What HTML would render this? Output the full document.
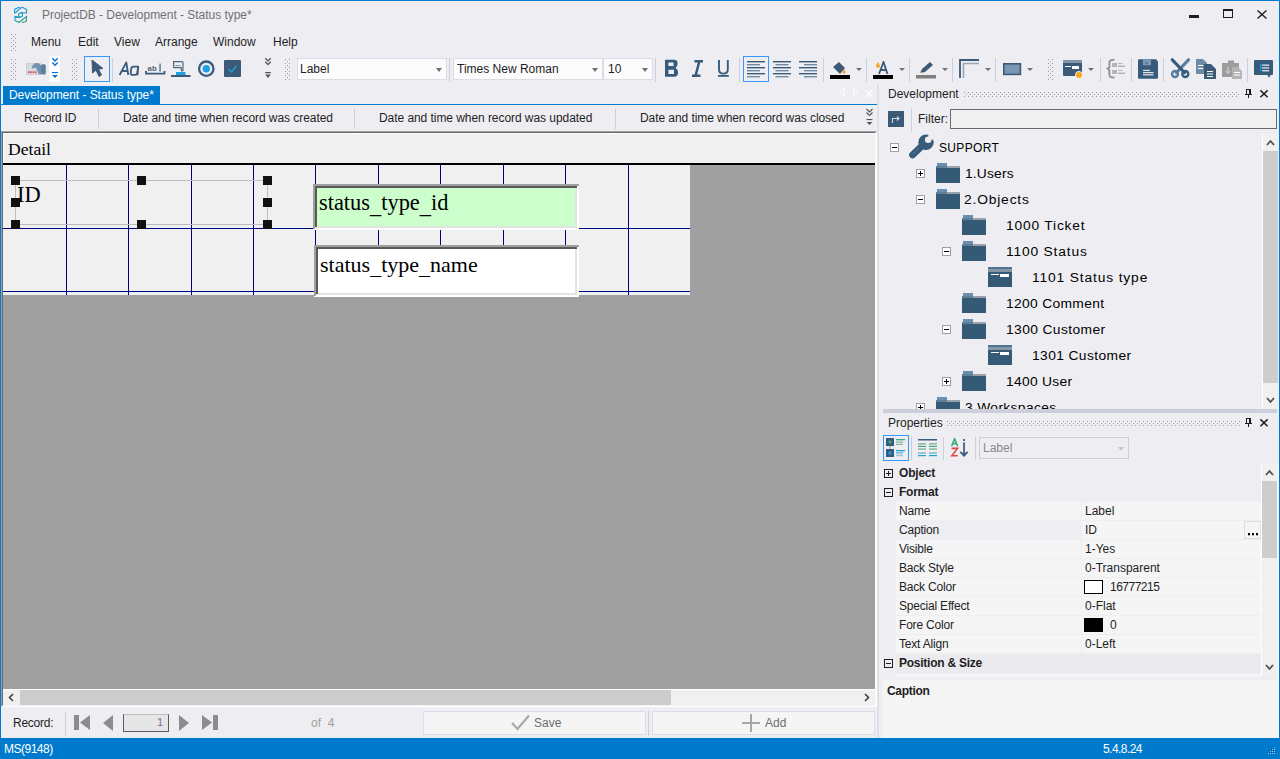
<!DOCTYPE html>
<html><head><meta charset="utf-8">
<style>
*{margin:0;padding:0;box-sizing:border-box}
html,body{width:1280px;height:759px;overflow:hidden;background:#EEEEF2;font-family:"Liberation Sans",sans-serif;font-size:12px;color:#1E1E1E}
.a{position:absolute}
.t{position:absolute;white-space:nowrap;line-height:1}
.serif{font-family:"Liberation Serif",serif;color:#000}
.grip{position:absolute;width:5px;background-image:radial-gradient(circle,#8a8a8a 0.9px,transparent 1.1px);background-size:4px 4px}
.sep{position:absolute;width:1px;background:#CCCEDB}
.combo{position:absolute;background:#FCFCFC;border:1px solid #DADCE6;height:22px;top:58px}
.arr{position:absolute;width:0;height:0;border-left:3.5px solid transparent;border-right:3.5px solid transparent;border-top:4px solid #717171}
.ic{position:absolute}
.gv{position:absolute;width:1px;background:#000080}
.gh{position:absolute;height:1px;background:#000080}
.hd{position:absolute;width:9px;height:9px;background:#111}
.tr{position:absolute;white-space:nowrap;line-height:1;font-size:12px;color:#000}
.xb{position:absolute;width:9px;height:9px;border:1px solid #A0A0A0;background:#fff}
.xb:before{content:"";position:absolute;left:1px;top:3px;width:5px;height:1px;background:#000}
.xp:after{content:"";position:absolute;left:3px;top:1px;width:1px;height:5px;background:#000}
.pr{position:absolute;left:896px;width:365px;height:18px;background:#F5F5F5}
.pn{position:absolute;left:899px;white-space:nowrap;line-height:1;letter-spacing:-0.2px}
.pv{position:absolute;left:1085px;white-space:nowrap;line-height:1}
.cb{position:absolute;width:9px;height:9px;border:1px solid #1E1E1E}
.cb:before{content:"";position:absolute;left:1px;top:3px;width:5px;height:1px;background:#1E1E1E}
.cbp:after{content:"";position:absolute;left:3px;top:1px;width:1px;height:5px;background:#1E1E1E}
.fo{position:absolute;width:24px;height:20px;background:linear-gradient(#355A75,#355A75) 0 5px/24px 15px no-repeat,linear-gradient(#5F7F98,#5F7F98) 0 3px/11px 2px no-repeat,linear-gradient(#9AA3AD,#9AA3AD) 11px 3px/13px 2px no-repeat,linear-gradient(#6B8EAE,#6B8EAE) 1px 0/10px 3px no-repeat}
.fm{position:absolute;width:24px;height:20px;background:linear-gradient(#fff,#fff) 3px 7px/8px 1px no-repeat,linear-gradient(#fff,#fff) 12px 7px/9px 3px no-repeat,linear-gradient(#4F7390,#4F7390) 0 0/24px 2px no-repeat,linear-gradient(#8597A5,#8597A5) 0 2px/24px 3px no-repeat,#355A75}
.arr2{border-left-width:3px;border-right-width:3px;border-top-width:3.5px}
</style></head><body>
<svg width="0" height="0" style="position:absolute"><defs><pattern id="gp" width="4" height="4" patternUnits="userSpaceOnUse"><rect x="0" y="0" width="1" height="1" fill="#9A9A9A"/><rect x="2" y="2" width="1" height="1" fill="#9A9A9A"/></pattern></defs></svg>
<!-- window border -->
<div class="a" style="left:0;top:0;width:1280px;height:1px;background:#007ACC"></div>
<div class="a" style="left:0;top:0;width:1px;height:759px;background:#007ACC"></div>
<div class="a" style="left:1279px;top:0;width:1px;height:759px;background:#007ACC"></div>

<!-- title bar -->
<svg class="ic" style="left:8px;top:3px" width="26" height="24" viewBox="0 0 26 24">
<defs><linearGradient id="lg" gradientUnits="userSpaceOnUse" x1="8" y1="4" x2="17" y2="20"><stop offset="0" stop-color="#1E9BE6"/><stop offset="0.55" stop-color="#22A0B8"/><stop offset="1" stop-color="#2FA060"/></linearGradient></defs>
<g fill="none" stroke="url(#lg)" stroke-width="1.15" stroke-linejoin="round">
<path d="M6.6 10.4 L6.6 6.3 L11.2 4.3 L12.2 5.4 L6.9 10.2"/><path d="M12.2 5.4 L14.3 4.3 L18.6 6.4 L18.6 10 L13 9.6"/><path d="M10.6 10.7 L12.7 9.7 L14.4 10.8 L14.4 13.2 L12.4 14.3 L10.6 13.3 Z"/>
<path d="M6.3 13.3 L12.3 14.4 M6.9 13.5 L7.1 17.6 L11 19.5 L18.6 13.4 L18.2 18.5 L14.1 19.5"/>
</g></svg>
<div class="t" style="left:42px;top:9px;font-size:12px;color:#717171;letter-spacing:-0.03px">ProjectDB - Development - Status type*</div>
<div class="a" style="left:1189px;top:15px;width:10px;height:3px;background:#1E1E1E"></div>
<div class="a" style="left:1223px;top:9px;width:10px;height:9px;border:1px solid #1E1E1E;border-top-width:2px"></div>
<svg class="ic" style="left:1257px;top:10px" width="10" height="9" viewBox="0 0 10 9"><path d="M0.5 0.5 L9.5 8.5 M9.5 0.5 L0.5 8.5" stroke="#1E1E1E" stroke-width="1.4"/></svg>

<!-- menu -->
<svg class="ic" style="left:11px;top:34px" width="5" height="17"><rect width="5" height="17" fill="url(#gp)"/></svg>
<div class="t" style="left:31px;top:36px">Menu</div>
<div class="t" style="left:78px;top:36px">Edit</div>
<div class="t" style="left:114px;top:36px">View</div>
<div class="t" style="left:155px;top:36px">Arrange</div>
<div class="t" style="left:213px;top:36px">Window</div>
<div class="t" style="left:273px;top:36px">Help</div>

<!-- toolbar -->
<svg class="ic" style="left:11px;top:59px" width="5" height="22"><rect width="5" height="22" fill="url(#gp)"/></svg>
<svg class="ic" style="left:26px;top:61px" width="21" height="15" viewBox="0 0 21 15">
<rect x="0.3" y="2.3" width="14.4" height="11.4" fill="#D5DBE1" stroke="#BFC3CA" stroke-width="0.6"/>
<rect x="2" y="10.3" width="1.6" height="1.8" fill="#E84A4A"/><rect x="4.2" y="10.3" width="1.6" height="1.8" fill="#E84A4A"/><rect x="6.6" y="10.3" width="1.4" height="1.8" fill="#E84A4A"/><rect x="8.6" y="10.3" width="2" height="1.8" fill="#E84A4A"/>
<path d="M5.8 6.3 Q6.5 3.8 9 2.3 Q11.5 1.4 13.5 2.8 L15.5 5 L15.5 13.2 L13 13.2 L9.5 6.2 L7.3 7.6 Q5.7 7.8 5.8 6.3 Z" fill="#7392B1"/>
<rect x="15" y="3.3" width="4.8" height="10.2" rx="1.6" fill="#5E7E9E"/>
</svg>
<div class="a" style="left:49px;top:56px;width:11px;height:26px;background:#fff"></div>
<svg class="ic" style="left:51px;top:56px" width="8" height="24" viewBox="0 0 8 24"><path d="M1.3 2.3 L4 5 L6.7 2.3 M1.3 6.5 L4 9.2 L6.7 6.5" fill="none" stroke="#0A72D0" stroke-width="1.5"/><rect x="1" y="16" width="6" height="1.2" fill="#0A72D0"/><path d="M1 19 L7 19 L4 22 Z" fill="#0A72D0"/></svg>
<svg class="ic" style="left:72px;top:59px" width="5" height="22"><rect width="5" height="22" fill="url(#gp)"/></svg>
<div class="a" style="left:84px;top:56px;width:26px;height:26px;border:1px solid #3399FF"></div>
<svg class="ic" style="left:91px;top:59px" width="13" height="19" viewBox="0 0 13 19"><path d="M1 1 L12 9.5 L7.5 10 L10.5 16 L8 17.5 L5 11 L1.5 14 Z" fill="#3A5A78" stroke="#3A5A78" stroke-width="1" stroke-linejoin="round"/></svg>
<div class="sep" style="left:112px;top:58px;height:24px"></div>
<svg class="ic" style="left:115px;top:56px" width="26" height="22" viewBox="0 0 26 22"><g fill="none" stroke="#3A5A78" stroke-width="1.8" stroke-linejoin="round"><path d="M4.6 19 L11.3 6.4 L13.3 19 M7.6 15 L12.6 15"/><path d="M23.2 10.6 L18.6 10.6 Q16.4 10.6 16.1 13.2 L15.8 16.8 Q15.6 18.9 17.6 18.9 L20.2 18.9 Q21.9 18.9 22.2 17 L23.2 10.6 L22.6 19.3"/></g></svg>
<svg class="ic" style="left:145px;top:62px" width="21" height="14" viewBox="0 0 21 14"><text x="2.6" y="9" font-family="Liberation Sans" font-size="7.8" font-weight="bold" fill="#4F6479">ab</text><rect x="14.4" y="1.6" width="1.3" height="8" fill="#4F6479"/><path d="M1 9 L1 11.6 L19.5 11.6 L19.5 9" fill="none" stroke="#3A5A78" stroke-width="1.8"/></svg>
<svg class="ic" style="left:171px;top:60px" width="20" height="18" viewBox="0 0 20 18"><path d="M2.6 1.7 L11 1.7 Q12 1.7 12 2.7 L12 10 Q12 10.9 11.1 10.9 Q10.3 10.9 10.3 10 L10.3 7.6 L3.2 7.6 Q2.6 7.6 2.6 7 Z" fill="none" stroke="#4A6782" stroke-width="1.2"/><rect x="4.2" y="5" width="5.4" height="1.1" fill="#8A9CAC"/><rect x="5" y="12" width="9.5" height="3" fill="#1BA1E2"/><rect x="0" y="15" width="19.5" height="2" fill="#3A5A78"/></svg>
<svg class="ic" style="left:197px;top:60px" width="18" height="18" viewBox="0 0 18 18"><circle cx="9.3" cy="8.7" r="7.2" fill="none" stroke="#365B7B" stroke-width="2.3"/><circle cx="9.3" cy="8.7" r="3.7" fill="#1BA1E2"/></svg>
<svg class="ic" style="left:224px;top:60px" width="18" height="18" viewBox="0 0 18 18"><rect x="0" y="0" width="17" height="17" rx="1" fill="#3A5A78"/><path d="M4.5 9 L7.5 12 L12.5 6" fill="none" stroke="#1BA1E2" stroke-width="1.4"/></svg>
<svg class="ic" style="left:264px;top:57px" width="9" height="22" viewBox="0 0 9 22"><path d="M1.3 1.2 L4 3.9 L6.7 1.2 M1.3 4.8 L4 7.5 L6.7 4.8" fill="none" stroke="#555" stroke-width="1.3"/><rect x="1.2" y="15" width="5.6" height="1.3" fill="#555"/><path d="M1.2 17.6 L6.8 17.6 L4 21 Z" fill="#555"/></svg>
<svg class="ic" style="left:285px;top:59px" width="5" height="22"><rect width="5" height="22" fill="url(#gp)"/></svg>

<div class="combo" style="left:297px;width:150px"></div>
<div class="t" style="left:300px;top:63px">Label</div>
<div class="arr" style="left:436px;top:68px"></div>
<div class="sep" style="left:449px;top:58px;height:24px"></div>
<div class="combo" style="left:453px;width:150px"></div>
<div class="t" style="left:457px;top:63px">Times New Roman</div>
<div class="arr" style="left:592px;top:68px"></div>
<div class="combo" style="left:603px;width:50px"></div>
<div class="t" style="left:608px;top:63px">10</div>
<div class="arr" style="left:642px;top:68px"></div>
<div class="sep" style="left:655px;top:58px;height:24px"></div>

<svg class="ic" style="left:660px;top:56px" width="75" height="26" viewBox="660 56 75 26"><path fill-rule="evenodd" fill="#365B7B" d="M665 59.8 L674.3 59.8 Q677.6 59.8 677.6 63.4 Q677.6 66.6 675.6 67.9 Q678.1 69.2 678.1 72.6 Q678.1 76.8 673.8 76.8 L665 76.8 Z M668.4 62.6 L673.5 62.6 L673.5 66 L668.4 66 Z M668.4 69.8 L674 69.8 L674 73.9 L668.4 73.9 Z"/><path d="M694.4 61.2 L703 61.2 M692 75.8 L700.5 75.8 M699.3 61.5 L695.6 75.5" stroke="#365B7B" stroke-width="2.5" fill="none"/><path d="M719 60 L719 69.5 Q719 73.6 723.4 73.6 Q727.8 73.6 727.8 69.5 L727.8 60" stroke="#365B7B" stroke-width="1.9" fill="none"/><rect x="718" y="75" width="10.8" height="1.8" fill="#365B7B"/></svg>


<div class="sep" style="left:739px;top:58px;height:24px"></div>
<div class="a" style="left:743px;top:56px;width:26px;height:26px;border:1px solid #3399FF"></div>
<svg class="ic" style="left:747px;top:60px" width="18" height="18" viewBox="0 0 18 18"><g fill="#3A5A78"><rect x="0" y="1" width="18" height="1.4"/><rect x="0" y="4" width="13" height="1.4" fill="#6F8BA4"/><rect x="0" y="7" width="18" height="1.4"/><rect x="0" y="10" width="13" height="1.4" fill="#6F8BA4"/><rect x="0" y="13" width="18" height="1.4"/><rect x="0" y="16" width="13" height="1.4" fill="#6F8BA4"/></g></svg>
<svg class="ic" style="left:773px;top:60px" width="18" height="18" viewBox="0 0 18 18"><g fill="#3A5A78"><rect x="0" y="1" width="18" height="1.4"/><rect x="2.5" y="4" width="13" height="1.4" fill="#6F8BA4"/><rect x="0" y="7" width="18" height="1.4"/><rect x="2.5" y="10" width="13" height="1.4" fill="#6F8BA4"/><rect x="0" y="13" width="18" height="1.4"/><rect x="2.5" y="16" width="13" height="1.4" fill="#6F8BA4"/></g></svg>
<svg class="ic" style="left:799px;top:60px" width="18" height="18" viewBox="0 0 18 18"><g fill="#3A5A78"><rect x="0" y="1" width="18" height="1.4"/><rect x="5" y="4" width="13" height="1.4" fill="#6F8BA4"/><rect x="0" y="7" width="18" height="1.4"/><rect x="5" y="10" width="13" height="1.4" fill="#6F8BA4"/><rect x="0" y="13" width="18" height="1.4"/><rect x="5" y="16" width="13" height="1.4" fill="#6F8BA4"/></g></svg>
<div class="sep" style="left:823px;top:58px;height:24px"></div>
<svg class="ic" style="left:830px;top:61px" width="21" height="18" viewBox="0 0 21 18"><path d="M3 6 L9 1 L15 7 L10 13 Z" fill="#3A5A78"/><path d="M14 8 Q16 10 15.5 12 Q14 13.5 12.5 12 Q12.5 10 14 8Z" fill="#F5A52A"/><rect x="0" y="14" width="20" height="4" fill="#000"/></svg>
<div class="arr arr2" style="left:856px;top:68px"></div>
<div class="sep" style="left:866px;top:58px;height:24px"></div>
<svg class="ic" style="left:873px;top:61px" width="21" height="18" viewBox="0 0 21 18"><path d="M6 13 L10.5 1 L14.5 13 M7.5 9 L13 9" fill="none" stroke="#3A5A78" stroke-width="1.8"/><path d="M5 1 Q7 3.6 7 5 Q7 7 5 7 Q3 7 3 5 Q3 3.6 5 1Z" fill="#F5A52A"/><rect x="0" y="14" width="20" height="4" fill="#000"/></svg>
<div class="arr arr2" style="left:899px;top:68px"></div>
<div class="sep" style="left:909px;top:58px;height:24px"></div>
<svg class="ic" style="left:916px;top:61px" width="21" height="18" viewBox="0 0 21 18"><path d="M4 12 L6 8 L14 1 L17 4 L9 11 Z" fill="#3A5A78"/><path d="M4 12 L5 10.5 L6 12 Z" fill="#F5A52A"/><rect x="0" y="14" width="20" height="3.5" fill="#7F7F7F"/></svg>
<div class="arr arr2" style="left:942px;top:68px"></div>
<div class="sep" style="left:952px;top:58px;height:24px"></div>
<svg class="ic" style="left:959px;top:59px" width="21" height="20" viewBox="0 0 21 20"><path d="M1 19 L1 1 L20 1" fill="none" stroke="#3A5A78" stroke-width="1.8"/><path d="M4.5 19 L4.5 4.5 L20 4.5" fill="none" stroke="#98A6B4" stroke-width="1.6"/></svg>
<div class="arr arr2" style="left:985px;top:68px"></div>
<div class="sep" style="left:995px;top:58px;height:24px"></div>
<svg class="ic" style="left:1003px;top:63px" width="19" height="13" viewBox="0 0 19 13"><rect x="0.8" y="0.8" width="16.6" height="10.6" fill="#7A98B6" stroke="#3A5A78" stroke-width="1.6"/></svg>
<div class="arr arr2" style="left:1027px;top:68px"></div>
<svg class="ic" style="left:1048px;top:59px" width="5" height="22"><rect width="5" height="22" fill="url(#gp)"/></svg>
<svg class="ic" style="left:1063px;top:60px" width="21" height="19" viewBox="0 0 21 19"><rect x="0" y="0" width="19" height="16" rx="1" fill="#3A5A78"/><rect x="0" y="0" width="19" height="3" fill="#8397A8"/><rect x="2" y="6" width="6" height="1" fill="#fff"/><rect x="9" y="6" width="7" height="3" fill="#fff"/><circle cx="16" cy="15" r="3.6" fill="#F5A52A" stroke="#fff" stroke-width="0.8"/></svg>
<div class="arr arr2" style="left:1088px;top:68px"></div>
<div class="sep" style="left:1100px;top:58px;height:24px"></div>
<svg class="ic" style="left:1100px;top:54px" width="30" height="30" viewBox="1100 54 30 30"><path d="M1114.5 59.6 Q1109.4 59.6 1109.4 62.2 L1109.4 67.2 L1107.6 68.6 L1109.4 70 L1109.4 75 Q1109.4 77.6 1114.5 77.6" fill="none" stroke="#8E8E8E" stroke-width="1.8"/><rect x="1112" y="63" width="5" height="4" fill="#B4B4B4"/><rect x="1112" y="70" width="5" height="4" fill="#B4B4B4"/><rect x="1118" y="63" width="4.5" height="1" fill="#B8B8B8"/><rect x="1118" y="65.6" width="7" height="1.3" fill="#A8A8A8"/><rect x="1118" y="70" width="4.5" height="1" fill="#B8B8B8"/><rect x="1118" y="72.6" width="7" height="1.3" fill="#A8A8A8"/></svg>
<div class="sep" style="left:1131px;top:58px;height:24px"></div>
<svg class="ic" style="left:1130px;top:54px" width="35" height="30" viewBox="1130 54 35 30"><path d="M1138 60.3 Q1138 59.3 1139 59.3 L1156 59.3 L1158 61.5 L1158 77.8 Q1158 78.8 1157 78.8 L1139 78.8 Q1138 78.8 1138 77.8 Z" fill="#365B7B"/><rect x="1143" y="59.3" width="8" height="6" fill="#7A9AB8"/><rect x="1145.5" y="62.6" width="2.5" height="1" fill="#365B7B"/><rect x="1143" y="69.8" width="7" height="1.2" fill="#E3E8ED"/><rect x="1143" y="72" width="10.5" height="1.2" fill="#E3E8ED"/><rect x="1143" y="74.2" width="10.5" height="1.2" fill="#E3E8ED"/></svg>
<div class="sep" style="left:1163px;top:58px;height:24px"></div>
<svg class="ic" style="left:1165px;top:54px" width="30" height="30" viewBox="1165 54 30 30"><path d="M1188.5 59.8 L1176.5 72.5" stroke="#5A7E9E" stroke-width="3.2" stroke-linecap="round"/><path d="M1172.3 59.8 L1184.5 72.5" stroke="#365B7B" stroke-width="3.2" stroke-linecap="round"/><circle cx="1175" cy="74" r="3" fill="none" stroke="#5A7E9E" stroke-width="2.4"/><circle cx="1185.3" cy="74" r="3" fill="none" stroke="#365B7B" stroke-width="2.4"/></svg>
<svg class="ic" style="left:1196px;top:59px" width="21" height="20" viewBox="0 0 21 20"><path d="M0 0 L7 0 L11 4 L11 15 L0 15 Z" fill="#6F8BA4"/><path d="M8 5 L15 5 L20 10 L20 20 L8 20 Z" fill="#3A5A78"/><rect x="11" y="12" width="6" height="1" fill="#fff"/><rect x="11" y="14.5" width="6" height="1" fill="#fff"/><rect x="11" y="17" width="6" height="1" fill="#fff"/><rect x="2" y="6" width="5" height="1" fill="#fff"/><rect x="2" y="9" width="5" height="1" fill="#fff"/></svg>
<svg class="ic" style="left:1222px;top:59px" width="21" height="20" viewBox="0 0 21 20"><path d="M0 4 L6 4 L6 1.5 L12 1.5 L12 4 L17 4 L17 18 L0 18 Z" fill="#9C9C9C"/><path d="M10 8 L16 8 L20 12 L20 20 L10 20 Z" fill="#B5B5B5"/><rect x="12" y="13" width="6" height="1" fill="#fff"/><rect x="12" y="15.5" width="6" height="1" fill="#fff"/><path d="M6 8 L6 14 M3.5 12 L6 14.5 L8.5 12" fill="none" stroke="#DADADA" stroke-width="1"/></svg>
<div class="sep" style="left:1247px;top:58px;height:24px"></div>
<svg class="ic" style="left:1250px;top:54px" width="28" height="30" viewBox="1250 54 28 30"><path d="M1254 61 Q1254 60 1255 60 L1272 60 Q1273 60 1273 61 L1273 74 Q1273 75 1272 75 L1270.5 75 L1269 78 L1267.5 75 L1255 75 Q1254 75 1254 74 Z" fill="#365B7B"/><rect x="1262.2" y="64.5" width="7" height="1.3" fill="#E3E8ED"/><rect x="1262.2" y="67.3" width="7" height="1.3" fill="#E3E8ED"/><rect x="1262.2" y="70.1" width="7" height="1.3" fill="#E3E8ED"/><path d="M1259.9 65.2 L1260.9 64.6 L1260.9 71" fill="none" stroke="#1BA1E2" stroke-width="1.2"/></svg>

<!-- tab strip -->
<div class="a" style="left:3px;top:86px;width:157px;height:18px;background:#007ACC"></div>
<div class="t" style="left:9px;top:89px;color:#fff;letter-spacing:-0.05px">Development - Status type*</div>
<svg class="ic" style="left:838px;top:88px" width="40" height="10" viewBox="0 0 40 10"><path d="M6 0.5 L1.5 4.5 L6 8.5 Z M15.5 0.5 L20 4.5 L15.5 8.5 Z" fill="none" stroke="#fff" stroke-width="1"/><path d="M27.5 2 L34.5 9 M34.5 2 L27.5 9" stroke="#fff" stroke-width="1.3"/></svg>
<div class="a" style="left:0;top:104px;width:877px;height:1px;background:#007ACC"></div>

<!-- column headers -->
<div class="t" style="left:24px;top:112px;letter-spacing:-0.2px">Record ID</div>
<div class="sep" style="left:98px;top:109px;height:20px"></div>
<div class="t" style="left:123px;top:112px;letter-spacing:-0.06px">Date and time when record was created</div>
<div class="sep" style="left:354px;top:109px;height:20px"></div>
<div class="t" style="left:379px;top:112px;letter-spacing:-0.06px">Date and time when record was updated</div>
<div class="sep" style="left:615px;top:109px;height:20px"></div>
<div class="t" style="left:640px;top:112px;letter-spacing:-0.07px">Date and time when record was closed</div>
<svg class="ic" style="left:865px;top:108px" width="9" height="20" viewBox="0 0 9 20"><path d="M1.5 1 L4.5 4 L7.5 1 M1.5 4.5 L4.5 7.5 L7.5 4.5" fill="none" stroke="#555" stroke-width="1.1"/><rect x="1.5" y="11" width="6" height="1.1" fill="#555"/><path d="M1.5 14 L7.5 14 L4.5 17 Z" fill="#555"/></svg>

<!-- detail area -->
<div class="a" style="left:1px;top:131px;width:876px;height:576px;border-style:solid;border-width:1px;border-color:#A0A0A0 #FFFFFF #FFFFFF #A0A0A0;background:#A0A0A0"><div class="a" style="left:0;top:0;right:0;bottom:0;border-style:solid;border-width:1px;border-color:#696969 #FAFAFA #F0F0F0 #696969"></div></div>
<div class="a" style="left:3px;top:133px;width:872px;height:30px;background:#F0F0F0;border-top:1px solid #fff;border-left:1px solid #fff"></div>
<div class="t serif" style="left:8px;top:140.5px;font-size:17.6px">Detail</div>
<div class="a" style="left:3px;top:163px;width:872px;height:2px;background:#000"></div>
<div class="a" style="left:3px;top:165px;width:687px;height:130px;background:#F0F0F0"></div>
<!-- grid -->
<div class="gv" style="left:66px;top:165px;height:130px"></div>
<div class="gv" style="left:128px;top:165px;height:130px"></div>
<div class="gv" style="left:191px;top:165px;height:130px"></div>
<div class="gv" style="left:253px;top:165px;height:130px"></div>
<div class="gv" style="left:315px;top:165px;height:130px"></div>
<div class="gv" style="left:378px;top:165px;height:130px"></div>
<div class="gv" style="left:440px;top:165px;height:130px"></div>
<div class="gv" style="left:503px;top:165px;height:130px"></div>
<div class="gv" style="left:565px;top:165px;height:130px"></div>
<div class="gv" style="left:628px;top:165px;height:130px"></div>
<div class="gh" style="left:3px;top:228px;width:687px"></div>
<div class="gh" style="left:3px;top:291px;width:687px"></div>
<!-- label selection -->
<div class="a" style="left:15px;top:180px;width:253px;height:45px;border:1px solid #BDBDBD"></div>
<div class="t serif" style="left:17px;top:184px;font-size:22.4px">ID</div>
<div class="hd" style="left:11px;top:176px"></div><div class="hd" style="left:137px;top:176px"></div><div class="hd" style="left:263px;top:176px"></div>
<div class="hd" style="left:11px;top:198px"></div><div class="hd" style="left:263px;top:198px"></div>
<div class="hd" style="left:11px;top:220px"></div><div class="hd" style="left:137px;top:220px"></div><div class="hd" style="left:263px;top:220px"></div>
<!-- text boxes -->
<div class="a" style="left:313px;top:184px;width:266px;height:46px;background:#FFFFFF"></div><div class="a" style="left:315px;top:186px;width:262px;height:42px;background:#E3E3E3"></div><div class="a" style="left:317px;top:188px;width:258px;height:38px;background:#CCFFCC"></div><div class="a" style="left:313px;top:184px;width:266px;height:2px;background:#A0A0A0"></div><div class="a" style="left:313px;top:184px;width:2px;height:45px;background:#A0A0A0"></div><div class="a" style="left:315px;top:186px;width:262px;height:2px;background:#5A5A5A"></div><div class="a" style="left:315px;top:186px;width:2px;height:41px;background:#5A5A5A"></div>
<div class="t serif" style="left:319px;top:192px;font-size:22.4px">status<span style="position:relative;top:2.5px">_</span>type<span style="position:relative;top:2.5px">_</span>id</div>
<div class="a" style="left:314px;top:245px;width:265px;height:52px;background:#FFFFFF"></div><div class="a" style="left:316px;top:247px;width:261px;height:48px;background:#E3E3E3"></div><div class="a" style="left:318px;top:249px;width:257px;height:44px;background:#FFFFFF"></div><div class="a" style="left:314px;top:245px;width:265px;height:2px;background:#A0A0A0"></div><div class="a" style="left:314px;top:245px;width:2px;height:51px;background:#A0A0A0"></div><div class="a" style="left:316px;top:247px;width:261px;height:2px;background:#5A5A5A"></div><div class="a" style="left:316px;top:247px;width:2px;height:47px;background:#5A5A5A"></div>
<div class="t serif" style="left:320px;top:254px;font-size:22px">status<span style="position:relative;top:2px">_</span>type<span style="position:relative;top:2px">_</span>name</div>

<!-- h scrollbar -->
<div class="a" style="left:3px;top:689px;width:872px;height:1px;background:#FFFFFF"></div>
<div class="a" style="left:3px;top:690px;width:872px;height:15px;background:#F0F0F0"></div>
<div class="a" style="left:20px;top:690px;width:651px;height:15px;background:#CDCDCD"></div>
<svg class="ic" style="left:7px;top:693px" width="8" height="9" viewBox="0 0 8 9"><path d="M6 1 L2.5 4.5 L6 8" fill="none" stroke="#404040" stroke-width="1.6"/></svg>
<svg class="ic" style="left:863px;top:693px" width="8" height="9" viewBox="0 0 8 9"><path d="M2 1 L5.5 4.5 L2 8" fill="none" stroke="#404040" stroke-width="1.6"/></svg>

<!-- record nav -->
<div class="t" style="left:13px;top:717px;letter-spacing:-0.25px">Record:</div>
<div class="sep" style="left:65px;top:712px;height:24px"></div>
<svg class="ic" style="left:74px;top:715px" width="146" height="17" viewBox="0 0 146 17"><g fill="#8C8C8C"><rect x="0" y="0" width="5" height="15"/><path d="M16 0 L16 15 L6 7.5 Z"/><path d="M39 0 L39 16 L29 8 Z"/><path d="M105 0 L105 16 L115 8 Z"/><path d="M128 0 L128 15 L138 7.5 Z"/><rect x="139" y="0" width="5" height="15"/></g></svg>
<div class="a" style="left:123px;top:714px;width:46px;height:18px;background:#E6E6E6;border:1px solid #5A5A5A;border-top-color:#BDBDBD"></div>
<div class="t" style="left:157px;top:717px;color:#7C6F9A;font-size:11px">1</div>
<div class="t" style="left:311px;top:717px;color:#A0A0A0">of&nbsp; 4</div>
<div class="a" style="left:423px;top:711px;width:223px;height:24px;background:#F5F5F5;border:1px solid #DADCE6"></div>
<svg class="ic" style="left:511px;top:714px" width="19" height="17" viewBox="0 0 19 17"><path d="M1 9 L6.5 15 L18 1.5" fill="none" stroke="#A6A6A6" stroke-width="2"/></svg>
<div class="t" style="left:534px;top:717px;color:#6D6D6D">Save</div>
<div class="sep" style="left:648px;top:711px;height:25px"></div>
<div class="a" style="left:652px;top:711px;width:223px;height:24px;background:#F5F5F5;border:1px solid #DADCE6"></div>
<svg class="ic" style="left:742px;top:714px" width="18" height="18" viewBox="0 0 18 18"><path d="M9 0 L9 18 M0 9 L18 9" stroke="#A6A6A6" stroke-width="2"/></svg>
<div class="t" style="left:765px;top:717px;color:#6D6D6D">Add</div>

<!-- right panel -->
<div class="a" style="left:877px;top:84px;width:2px;height:654px;background:#DEDFE8"></div>
<div class="t" style="left:888px;top:88px">Development</div>
<svg class="ic" style="left:964px;top:92px" width="275" height="5"><rect width="275" height="5" fill="url(#gp)"/></svg>
<svg class="ic" style="left:1240px;top:84px" width="36" height="20" viewBox="1240 84 36 20"><g fill="#1E1E1E"><rect x="1246" y="89" width="5" height="1"/><rect x="1246" y="89" width="1" height="5"/><rect x="1249" y="89" width="2" height="5"/><rect x="1245" y="94" width="7" height="1"/><rect x="1248" y="95" width="1" height="3"/></g><path d="M1260.4 90.4 L1267.6 97.2 M1267.6 90.4 L1260.4 97.2" stroke="#1E1E1E" stroke-width="1.5"/></svg>

<div class="a" style="left:888px;top:111px;width:16px;height:16px;background:#3A5A78"></div>
<svg class="ic" style="left:888px;top:111px" width="16" height="16" viewBox="0 0 16 16"><path d="M4.5 12 L4.5 7.5 L11 7.5 M9 5.5 L11 7.5 L9 9.5" fill="none" stroke="#D0D8E0" stroke-width="1.1"/></svg>
<div class="sep" style="left:911px;top:108px;height:24px"></div>
<div class="t" style="left:918px;top:113px">Filter:</div>
<div class="a" style="left:950px;top:109px;width:327px;height:20px;background:#F0F0F0;border:1px solid #6A6A6A"></div>

<!-- tree -->
<div class="xb" style="left:890px;top:143px"></div>
<svg class="ic" style="left:904px;top:130px" width="36" height="32" viewBox="0 0 36 32"><path d="M21 13 L8.5 25" stroke="#365B7B" stroke-width="6.8" stroke-linecap="round"/><circle cx="22" cy="12.2" r="7.7" fill="#365B7B"/><circle cx="24.2" cy="9.8" r="3.3" fill="#EEEEF2"/><path d="M24.2 9.8 L24.5 2 L33 9.5 Z" fill="#EEEEF2"/><path d="M9 24 L14.5 18.5" stroke="#6F8FAA" stroke-width="0.8" stroke-dasharray="1.2 0.6"/></svg>
<div class="tr" style="left:939px;top:142px;letter-spacing:0.35px">SUPPORT</div>

<div class="xb xp" style="left:916px;top:169px"></div>
<div class="fo" style="left:936px;top:163px"></div>
<div class="tr" style="left:965px;top:168px;letter-spacing:0.15px;transform:scaleX(1.15);transform-origin:0 0">1.Users</div>
<div class="xb" style="left:916px;top:195px"></div>
<div class="fo" style="left:936px;top:189px"></div>
<div class="tr" style="left:964.2px;top:194px;letter-spacing:0.72px;transform:scaleX(1.15);transform-origin:0 0">2.Objects</div>
<div class="fo" style="left:962px;top:215px"></div>
<div class="tr" style="left:1005.5px;top:220px;letter-spacing:0.7px;transform:scaleX(1.15);transform-origin:0 0">1000 Ticket</div>
<div class="xb" style="left:942px;top:247px"></div>
<div class="fo" style="left:962px;top:241px"></div>
<div class="tr" style="left:1005.5px;top:246px;letter-spacing:0.71px;transform:scaleX(1.15);transform-origin:0 0">1100 Status</div>
<div class="fm" style="left:988px;top:267px"></div>
<div class="tr" style="left:1031.9px;top:272px;letter-spacing:0.74px;transform:scaleX(1.15);transform-origin:0 0">1101 Status type</div>
<div class="fo" style="left:962px;top:293px"></div>
<div class="tr" style="left:1005.5px;top:298px;letter-spacing:0.29px;transform:scaleX(1.15);transform-origin:0 0">1200 Comment</div>
<div class="xb" style="left:942px;top:325px"></div>
<div class="fo" style="left:962px;top:319px"></div>
<div class="tr" style="left:1005.5px;top:324px;letter-spacing:0.34px;transform:scaleX(1.15);transform-origin:0 0">1300 Customer</div>
<div class="fm" style="left:988px;top:345px"></div>
<div class="tr" style="left:1031.7px;top:350px;letter-spacing:0.34px;transform:scaleX(1.15);transform-origin:0 0">1301 Customer</div>
<div class="xb xp" style="left:942px;top:377px"></div>
<div class="fo" style="left:962px;top:371px"></div>
<div class="tr" style="left:1005.5px;top:376px;letter-spacing:0.27px;transform:scaleX(1.15);transform-origin:0 0">1400 User</div>
<div class="a" style="left:880px;top:397px;width:382px;height:12px;overflow:hidden">
<div class="xb xp" style="left:36px;top:6px"></div>
<div class="fo" style="left:56px;top:0px"></div>
<div class="tr" style="left:85px;top:5px;letter-spacing:0.31px;transform:scaleX(1.15);transform-origin:0 0">3.Workspaces</div>
</div>
<!-- tree scrollbar -->
<div class="a" style="left:1262px;top:134px;width:1px;height:275px;background:#FFFFFF"></div>
<div class="a" style="left:1263px;top:134px;width:15px;height:275px;background:#F0F0F0"></div>
<div class="a" style="left:1263px;top:151px;width:15px;height:232px;background:#CDCDCD"></div>
<svg class="ic" style="left:1266px;top:139px" width="9" height="7" viewBox="0 0 9 7"><path d="M1 6 L4.5 2 L8 6" fill="none" stroke="#505050" stroke-width="1.8"/></svg>
<svg class="ic" style="left:1266px;top:397px" width="9" height="7" viewBox="0 0 9 7"><path d="M1 1 L4.5 5 L8 1" fill="none" stroke="#505050" stroke-width="1.8"/></svg>
<!-- splitter -->
<div class="a" style="left:883px;top:409px;width:394px;height:4px;background:#CCCEDB"></div>

<!-- properties -->
<div class="t" style="left:888px;top:417px">Properties</div>
<svg class="ic" style="left:947px;top:421px" width="293" height="5"><rect width="293" height="5" fill="url(#gp)"/></svg>
<svg class="ic" style="left:1240px;top:413px" width="36" height="20" viewBox="1240 413 36 20"><g fill="#1E1E1E"><rect x="1246" y="418" width="5" height="1"/><rect x="1246" y="418" width="1" height="5"/><rect x="1249" y="418" width="2" height="5"/><rect x="1245" y="423" width="7" height="1"/><rect x="1248" y="424" width="1" height="3"/></g><path d="M1260.4 419.4 L1267.6 426.2 M1267.6 419.4 L1260.4 426.2" stroke="#1E1E1E" stroke-width="1.5"/></svg>

<div class="a" style="left:883px;top:435px;width:26px;height:26px;border:1px solid #3399FF"></div>
<svg class="ic" style="left:886px;top:438px" width="20" height="20" viewBox="0 0 20 20"><rect x="3.5" y="7" width="1" height="5" fill="#8A9AA8"/><rect x="0" y="0" width="8" height="8" fill="#365B7B"/><rect x="0" y="11" width="8" height="8" fill="#365B7B"/><path d="M4 2 L6 4 L4 6 L2 4 Z" fill="#3DAA7A"/><path d="M4 13 L6 15 L4 17 L2 15 Z" fill="#1BA1E2"/><rect x="10" y="1" width="9" height="1.3" fill="#3DAA7A"/><rect x="10" y="3.2" width="7" height="1.8" fill="#A8C4B4"/><rect x="10" y="5.8" width="7" height="1.2" fill="#7FB59A"/><rect x="10" y="12" width="9" height="1.3" fill="#1BA1E2"/><rect x="10" y="14.2" width="7" height="1.4" fill="#6DB5DC"/><rect x="10" y="16.6" width="7" height="1.6" fill="#9DC3D6"/></svg>
<div class="sep" style="left:911px;top:437px;height:23px"></div>
<svg class="ic" style="left:918px;top:439px" width="20" height="18" viewBox="0 0 20 18"><rect x="0" y="0" width="19" height="1.5" fill="#365B7B"/><rect x="0" y="4" width="8" height="1.7" fill="#98BCA8"/><rect x="11" y="4" width="8" height="1.7" fill="#98BCA8"/><rect x="0" y="6.8" width="8" height="1.2" fill="#3DAA7A"/><rect x="11" y="6.8" width="8" height="1.2" fill="#3DAA7A"/><rect x="0" y="9.2" width="8" height="1.7" fill="#98BCA8"/><rect x="11" y="9.2" width="8" height="1.7" fill="#98BCA8"/><rect x="0" y="13.2" width="8" height="1.7" fill="#8DBAD2"/><rect x="11" y="13.2" width="8" height="1.7" fill="#8DBAD2"/><rect x="0" y="16" width="8" height="1.2" fill="#1BA1E2"/><rect x="11" y="16" width="8" height="1.2" fill="#1BA1E2"/></svg>
<div class="sep" style="left:943px;top:437px;height:23px"></div>
<svg class="ic" style="left:950px;top:438px" width="20" height="20" viewBox="0 0 20 20"><path d="M1.6 8.3 L4.6 0.6 L7.6 8.3 M2.8 5.6 L6.4 5.6" fill="none" stroke="#3DAA7A" stroke-width="1.6"/><path d="M1.6 10.4 L7.6 10.4 L1.8 17.8 L7.8 17.8" fill="none" stroke="#E04848" stroke-width="1.6"/><rect x="13.2" y="1" width="1.7" height="2" fill="#365B7B"/><rect x="13.2" y="4.4" width="1.7" height="13" fill="#365B7B"/><path d="M10.4 13.8 L14 17.6 L17.6 13.8" fill="none" stroke="#365B7B" stroke-width="1.8"/></svg>
<div class="sep" style="left:975px;top:437px;height:23px"></div>
<div class="a" style="left:979px;top:437px;width:150px;height:22px;border:1px solid #CCCEDB;background:#EEEEF2"></div>
<div class="t" style="left:983px;top:442px;color:#8A8A8A">Label</div>
<div class="arr" style="left:1118px;top:447px;border-top-color:#C6C6C6"></div>

<!-- property grid -->
<div class="cb cbp" style="left:884px;top:469px"></div>
<div class="t" style="left:899px;top:467px;font-weight:bold;letter-spacing:-0.2px">Object</div>
<div class="cb" style="left:884px;top:488px"></div>
<div class="t" style="left:899px;top:486px;font-weight:bold;letter-spacing:-0.25px">Format</div>

<div class="pr" style="top:502px"></div><div class="pn" style="top:505px">Name</div><div class="pv" style="top:505px">Label</div>
<div class="pr" style="top:521px"></div><div class="pn" style="top:524px">Caption</div><div class="pv" style="top:524px">ID</div>
<div class="pr" style="top:540px"></div><div class="pn" style="top:543px">Visible</div><div class="pv" style="top:543px">1-Yes</div>
<div class="pr" style="top:559px"></div><div class="pn" style="top:562px">Back Style</div><div class="pv" style="top:562px">0-Transparent</div>
<div class="pr" style="top:578px"></div><div class="pn" style="top:581px">Back Color</div><div class="pv" style="top:581px;left:1110px;letter-spacing:-0.5px">16777215</div>
<div class="pr" style="top:597px"></div><div class="pn" style="top:600px">Special Effect</div><div class="pv" style="top:600px">0-Flat</div>
<div class="pr" style="top:616px"></div><div class="pn" style="top:619px">Fore Color</div><div class="pv" style="top:619px;left:1110px">0</div>
<div class="pr" style="top:635px"></div><div class="pn" style="top:638px">Text Align</div><div class="pv" style="top:638px">0-Left</div>
<div class="a" style="left:896px;top:521px;width:185px;height:18px;background:#EEEEF2"></div>
<div class="pn" style="top:524px">Caption</div>
<div class="a" style="left:1081px;top:502px;width:1px;height:152px;background:#EEEEF2"></div>
<div class="a" style="left:1244px;top:521px;width:17px;height:18px;background:#F5F5F5;border:1px solid #DADCE6"></div>
<svg class="ic" style="left:1247px;top:532px" width="12" height="4"><rect x="1" y="1" width="2" height="2.3" fill="#000"/><rect x="5" y="1" width="2" height="2.3" fill="#000"/><rect x="9" y="1" width="2" height="2.3" fill="#000"/></svg>
<div class="a" style="left:1084px;top:580px;width:19px;height:14px;background:#fff;border:1px solid #000"></div>
<div class="a" style="left:1084px;top:618px;width:19px;height:14px;background:#000"></div>
<div class="a" style="left:896px;top:654px;width:365px;height:19px;background:#EBEBEF"></div>
<div class="cb" style="left:884px;top:659px"></div>
<div class="t" style="left:899px;top:657px;font-weight:bold;letter-spacing:-0.25px">Position &amp; Size</div>
<div class="a" style="left:896px;top:674px;width:365px;height:3px;background:#F5F5F5"></div>
<!-- prop scrollbar -->
<div class="a" style="left:1261px;top:464px;width:1px;height:212px;background:#FFFFFF"></div>
<div class="a" style="left:1262px;top:464px;width:15px;height:212px;background:#F0F0F0"></div>
<div class="a" style="left:1277px;top:464px;width:2px;height:274px;background:#F5F5F5"></div>
<div class="a" style="left:1262px;top:481px;width:15px;height:77px;background:#CDCDCD"></div>
<svg class="ic" style="left:1265px;top:469px" width="9" height="7" viewBox="0 0 9 7"><path d="M1 6 L4.5 2 L8 6" fill="none" stroke="#505050" stroke-width="1.8"/></svg>
<svg class="ic" style="left:1265px;top:664px" width="9" height="7" viewBox="0 0 9 7"><path d="M1 1 L4.5 5 L8 1" fill="none" stroke="#505050" stroke-width="1.8"/></svg>
<!-- description -->
<div class="a" style="left:882px;top:680px;width:396px;height:58px;background:#F5F5F5"></div>
<div class="t" style="left:887px;top:685px;font-weight:bold;letter-spacing:-0.3px">Caption</div>

<!-- status bar -->
<div class="a" style="left:0;top:738px;width:1280px;height:21px;background:#007ACC"></div>
<div class="t" style="left:4px;top:743px;color:#fff;letter-spacing:-0.5px">MS(9148)</div>
<div class="t" style="left:1103px;top:743px;color:#fff;letter-spacing:-0.55px">5.4.8.24</div>
<svg class="ic" style="left:1266px;top:745px" width="10" height="10"><rect x="7" y="1" width="1" height="1" fill="#0A5A9A"/><rect x="8" y="2" width="1" height="1" fill="#8CD0FF"/><rect x="7" y="3" width="1" height="1" fill="#0A5A9A"/><rect x="8" y="4" width="1" height="1" fill="#8CD0FF"/><rect x="5" y="3" width="1" height="1" fill="#0A5A9A"/><rect x="6" y="4" width="1" height="1" fill="#8CD0FF"/><rect x="7" y="5" width="1" height="1" fill="#0A5A9A"/><rect x="8" y="6" width="1" height="1" fill="#8CD0FF"/><rect x="5" y="5" width="1" height="1" fill="#0A5A9A"/><rect x="6" y="6" width="1" height="1" fill="#8CD0FF"/><rect x="3" y="5" width="1" height="1" fill="#0A5A9A"/><rect x="4" y="6" width="1" height="1" fill="#8CD0FF"/><rect x="7" y="7" width="1" height="1" fill="#0A5A9A"/><rect x="8" y="8" width="1" height="1" fill="#8CD0FF"/><rect x="5" y="7" width="1" height="1" fill="#0A5A9A"/><rect x="6" y="8" width="1" height="1" fill="#8CD0FF"/><rect x="3" y="7" width="1" height="1" fill="#0A5A9A"/><rect x="4" y="8" width="1" height="1" fill="#8CD0FF"/><rect x="1" y="7" width="1" height="1" fill="#0A5A9A"/><rect x="2" y="8" width="1" height="1" fill="#8CD0FF"/></svg>
</body></html>
